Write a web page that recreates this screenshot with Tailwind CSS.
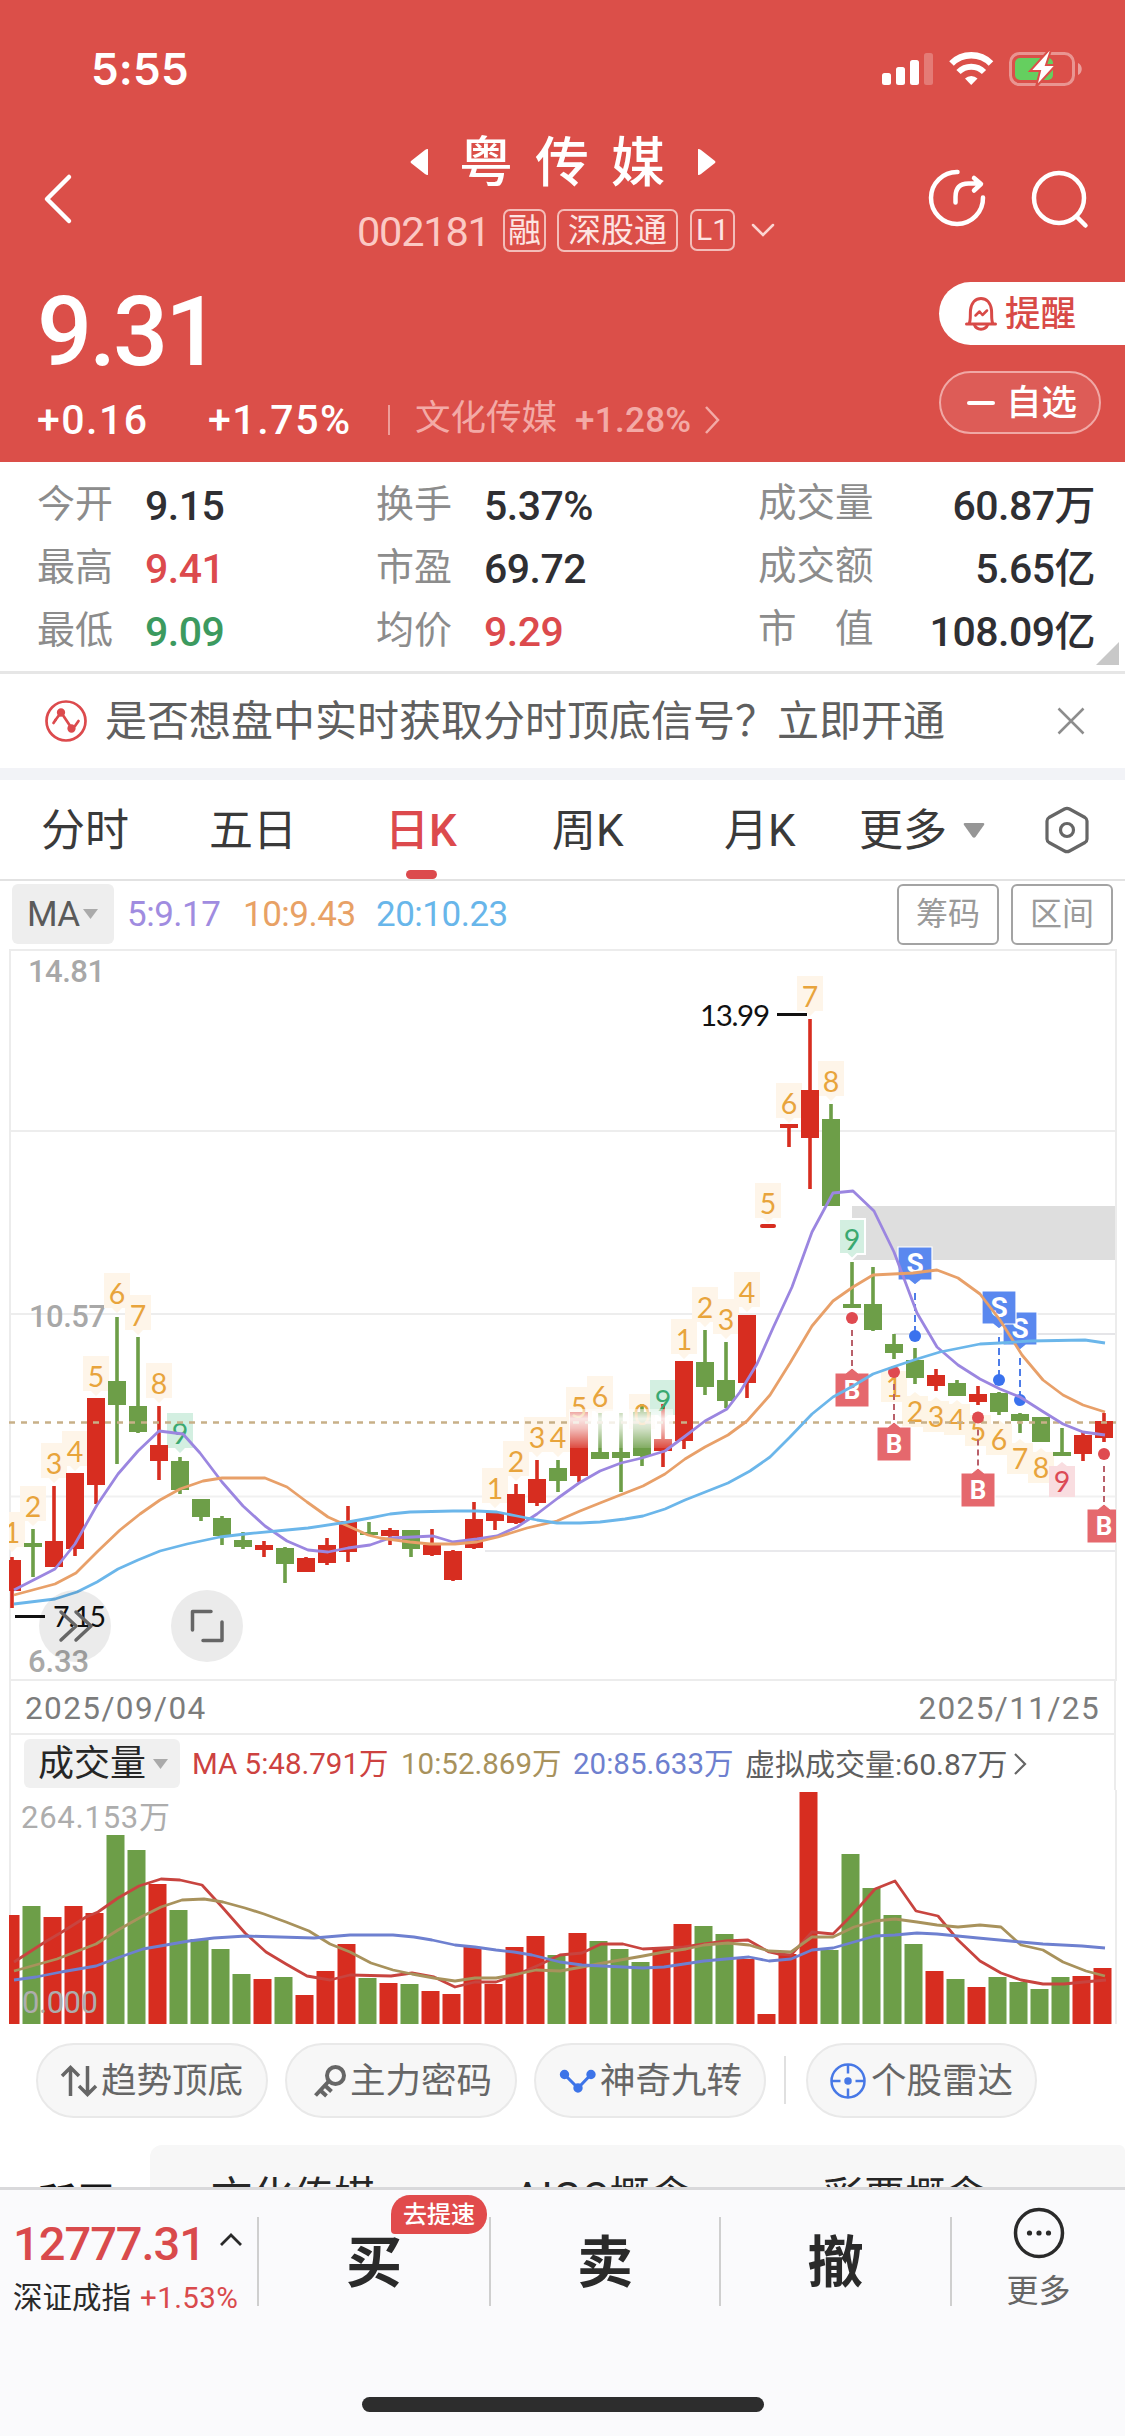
<!DOCTYPE html>
<html lang="zh-CN">
<head>
    <meta charset="UTF-8">
    <meta name="viewport" content="width=device-width, initial-scale=1.0">
    <title>粤传媒 002181</title>
    <script src="https://cdn.jsdelivr.net/npm/@tailwindcss/browser@4"></script>
</head>
<body class="w-[1125px] h-[2436px] overflow-hidden bg-white font-[Roboto,'Noto_Sans_CJK_SC',sans-serif] leading-none whitespace-nowrap">
    <div class="flex flex-col h-[2436px]">
        <!-- Header -->
        <header class="h-[462px] shrink-0 bg-[#db4f49] text-white flex flex-col">
            <!-- Status bar -->
            <div class="h-[138px] flex items-center justify-between pl-[91px] pr-[42px]">
                <span class="font-[Inter,sans-serif] font-semibold text-[44px] tracking-[0.2px]">5:55</span>
                <svg class="w-[202px] h-[36px]" viewBox="881 51 202 36" fill="none">
                    <g fill="#fff">
                        <rect x="882" y="73" width="9" height="12" rx="2.5" />
                        <rect x="896" y="67" width="9" height="18" rx="2.5" />
                        <rect x="910" y="60" width="9" height="25" rx="2.5" />
                        <rect x="924" y="53" width="9" height="32" rx="2.5" opacity=".25" />
                        <path d="M965 78.500a9 9 0 0 1 12.500 0L971.200 85z" />
                    </g>
                    <path d="M951.500 63.500a28 28 0 0 1 39.500 0" stroke="#fff" stroke-width="6.500" />
                    <path d="M958.500 72a18 18 0 0 1 25.500 0" stroke="#fff" stroke-width="6" />
                    <rect x="1010.500" y="53.500" width="63" height="31" rx="9" stroke="#fff" stroke-opacity=".4" stroke-width="3" />
                    <path d="M1078 63c5 2 5 10 0 12z" fill="#fff" opacity=".45" />
                    <rect x="1015" y="58" width="38" height="22" rx="5" fill="#65cf5f" />
                    <path d="M1049 50l-19 21h10l-4 16 20-22h-10l5-15z" fill="#fff" stroke="#db4f49" stroke-width="2" />
                </svg>
            </div>
            <!-- Title and navigation -->
            <div class="h-[124px] flex">
                <svg class="w-[32px] h-[52px] mt-[35px] ml-[42px]" viewBox="42 173 32 52" fill="none" stroke="#fff" stroke-width="4.500" stroke-linecap="round" stroke-linejoin="round"><path d="M69 177L47 199l22 22" /></svg>
                <div class="ml-[283px] w-[420px] flex flex-col">
                    <div class="h-[48px] flex items-center justify-center pr-[8px]">
                        <svg class="w-[20px] h-[28px]" viewBox="0 0 20 28" fill="#fff"><path d="M19 1v26Q17 27 16 26L2 15q-1-1 0-2L16 2q1-1 3-1z" /></svg>
                        <h1 class="ml-[30px] mr-[10px] pt-[3px] text-[54px] font-medium tracking-[22px]">粤传媒</h1>
                        <svg class="w-[20px] h-[28px]" viewBox="0 0 20 28" fill="#fff"><path d="M1 1v26q2 0 3-1L18 15q1-1 0-2L4 2Q3 1 1 1z" /></svg>
                    </div>
                    <div class="mt-[22px] h-[44px] flex items-center">
                        <span class="w-[146px] pt-[4px] text-[41.500px] tracking-[-1.200px] text-[#fbc9c4]">002181</span>
                        <span class="w-[43px] h-[43px] border-2 border-[#f3bdb9] rounded-[7px] text-[33px] text-[#fde4e2] flex items-center justify-center">融</span>
                        <span class="ml-[11px] w-[121px] h-[43px] border-2 border-[#f3bdb9] rounded-[7px] text-[33px] text-[#fde4e2] flex items-center justify-center">深股通</span>
                        <span class="ml-[12px] w-[45px] h-[42px] border-2 border-[#f3bdb9] rounded-[7px] text-[30px] text-[#fde4e2] flex items-center justify-center">L1</span>
                        <svg class="ml-[15px] w-[26px] h-[16px]" viewBox="0 0 26 16" fill="none" stroke="#fbd5d2" stroke-width="2.500" stroke-linecap="round"><path d="M3 3l10 10L23 3" /></svg>
                    </div>
                </div>
                <svg class="ml-[149px] w-[164px] h-[64px] mt-[29px]" viewBox="926 167 164 64" fill="none" stroke="#fff" stroke-width="4.500" stroke-linecap="round" stroke-linejoin="round">
                    <path d="M957.500 172A26 26 0 1 0 983 197.500" />
                    <path d="M955.500 202.500V197q0-13.500 13-13.500H980M974 178l7 6-7 6.500" />
                    <circle cx="1059" cy="198" r="25" />
                    <path d="M1077 217l8.500 8.500" />
                </svg>
            </div>
            <!-- Price -->
            <div class="flex-1 flex justify-between">
                <div class="pl-[37px]">
                    <div class="mt-[22px] text-[97px] font-medium tracking-[-3px]">9.31</div>
                    <div class="mt-[15px] h-[48px] flex items-center text-[41px] font-medium">
                        <span class="w-[171px] tracking-[1.500px]">+0.16</span>
                        <span class="w-[180px] tracking-[1.600px]">+1.75%</span>
                        <span class="w-[2px] h-[30px] bg-[#ee9d99]"></span>
                        <span class="ml-[25px] text-[35.500px] font-normal text-[#f3aaa6] -translate-y-px">文化传媒</span>
                        <span class="ml-[18px] w-[122px] text-[35px] text-[#f3aaa6] tracking-[0.300px]">+1.28%</span>
                        <svg class="ml-[6px] w-[18px] h-[30px]" viewBox="0 0 18 30" fill="none" stroke="#f3aaa6" stroke-width="2.500"><path d="M3 2l12 13L3 28" /></svg>
                    </div>
                </div>
                <div class="w-[186px] mt-[20px]">
                    <div class="h-[63px] bg-white rounded-l-full flex items-center text-[#d84a47]">
                        <svg class="ml-[25px] w-[34px] h-[36px]" viewBox="0 0 34 36" fill="none" stroke="#d84a47" stroke-width="3" stroke-linecap="round" stroke-linejoin="round">
                            <path d="M2.500 28h29M5 28c2-4 1-8 1.500-14C7.500 6 12 2.500 17 2.500S26.500 6 27.500 14c.5 6-.5 10 1.500 14" />
                            <path d="M10.500 29c2 5.500 11 5.500 13 0" />
                            <path d="M11.500 19.500l4-4 3 3.500 4.500-4.500" stroke-width="2.500" />
                        </svg>
                        <span class="ml-[7px] text-[35.500px] font-medium translate-y-px">提醒</span>
                    </div>
                    <div class="mt-[26px] w-[162px] h-[63px] rounded-full border-2 border-[#f0a8a5] bg-white/8 flex items-center">
                        <span class="ml-[26px] w-[28px] h-[4px] bg-white rounded-full"></span>
                        <span class="ml-[11px] text-[35.500px] font-medium translate-y-px">自选</span>
                    </div>
                </div>
            </div>
        </header>

        <!-- Quote figures -->
        <section class="h-[212px] shrink-0 border-b-[3px] border-[#e6e6e6] pt-[13px] relative text-[41px] font-medium text-[#2f2f33] tracking-[-0.5px]">
            <div class="h-[63px] flex items-center pl-[37px] pr-[30px]">
                <span class="w-[108px] text-[38px] font-normal text-[#8c8c8c] tracking-normal -translate-y-[3px]">今开</span><span class="w-[231px]">9.15</span>
                <span class="w-[108px] text-[38px] font-normal text-[#8c8c8c] tracking-normal -translate-y-[3px]">换手</span><span class="w-[274px]">5.37%</span>
                <span class="w-[116px] text-[38.500px] font-normal text-[#8c8c8c] tracking-normal -translate-y-[3px]">成交量</span><span class="flex-1 text-right">60.87万</span>
            </div>
            <div class="h-[63px] flex items-center pl-[37px] pr-[30px]">
                <span class="w-[108px] text-[38px] font-normal text-[#8c8c8c] tracking-normal -translate-y-[3px]">最高</span><span class="w-[231px] text-[#dc4a4d]">9.41</span>
                <span class="w-[108px] text-[38px] font-normal text-[#8c8c8c] tracking-normal -translate-y-[3px]">市盈</span><span class="w-[274px]">69.72</span>
                <span class="w-[116px] text-[38.500px] font-normal text-[#8c8c8c] tracking-normal -translate-y-[3px]">成交额</span><span class="flex-1 text-right">5.65亿</span>
            </div>
            <div class="h-[63px] flex items-center pl-[37px] pr-[30px]">
                <span class="w-[108px] text-[38px] font-normal text-[#8c8c8c] tracking-normal -translate-y-[3px]">最低</span><span class="w-[231px] text-[#3c9a5f]">9.09</span>
                <span class="w-[108px] text-[38px] font-normal text-[#8c8c8c] tracking-normal -translate-y-[3px]">均价</span><span class="w-[274px] text-[#dc4a4d]">9.29</span>
                <span class="w-[116px] text-[38.500px] font-normal text-[#8c8c8c] tracking-normal -translate-y-[3px]">市　值</span><span class="flex-1 text-right">108.09亿</span>
            </div>
            <svg class="absolute right-[6px] bottom-[6px] w-[23px] h-[23px]" viewBox="0 0 23 23" fill="#c8c8c8"><path d="M23 0v23H0z" /></svg>
        </section>

        <!-- Banner -->
        <section class="h-[94px] shrink-0 flex items-center pl-[45px] pr-[40px] text-[42px] text-[#5f5f5f]">
            <svg class="w-[42px] h-[42px]" viewBox="0 0 42 42" fill="none" stroke="#dc4a4d" stroke-width="2.700" stroke-linecap="round" stroke-linejoin="round">
                <circle cx="21" cy="21" r="19.500" />
                <path d="M8.500 23l2-3M18.500 16l6 9M30 26l3.500-5" />
                <circle cx="16" cy="12.500" r="2.800" fill="#dc4a4d" /><circle cx="26.500" cy="28.500" r="2.800" fill="#dc4a4d" />
                <path d="M10.500 20l4-5.500" />
            </svg>
            <span class="ml-[18px] flex-1 translate-y-[1px]">是否想盘中实时获取分时顶底信号？立即开通</span>
            <svg class="w-[28px] h-[28px]" viewBox="0 0 28 28" stroke="#8d8d8d" stroke-width="2.500"><path d="M1.500 1.500l25 25M26.500 1.500l-25 25" /></svg>
        </section>
        <div class="h-[12px] shrink-0 bg-[#f2f3f7]"></div>

        <!-- Period tabs -->
        <nav class="h-[101px] shrink-0 border-b-2 border-[#e2e2e2] flex items-center pl-[41px] pt-[2px] text-[44px] text-[#3a3a3a] relative">
            <span class="w-[168px]">分时</span>
            <span class="w-[176px]">五日</span>
            <span class="w-[167px] text-[#dc4a4d] font-medium">日K</span>
            <span class="w-[172px]">周K</span>
            <span class="w-[135px]">月K</span>
            <span class="w-[104px]">更多</span>
            <svg class="w-[22px] h-[15px]" viewBox="0 0 22 15" fill="#969696"><path d="M2 0h18q2 0 1 2l-8.500 12q-1.500 1.500-3 0L1 2Q0 0 2 0z" /></svg>
            <svg class="ml-[59px] mb-[2px] w-[46px] h-[48px]" viewBox="0 0 46 48" fill="none" stroke="#666" stroke-width="3.200" stroke-linejoin="round"><path d="M20.500 3q2.500-1.300 5 0L41 11.500q2 1.200 2 3.500v18q0 2.300-2 3.500L25.500 45q-2.500 1.300-5 0L5 36.500Q3 35.300 3 33V15q0-2.300 2-3.500z" /><circle cx="23" cy="24" r="6.500" /></svg>
            <span class="absolute left-[406px] bottom-0 w-[31px] h-[9px] rounded-[5px] bg-[#dc4a4d]"></span>
        </nav>

        <!-- Moving averages -->
        <div class="h-[68px] shrink-0 flex items-center pl-[12px] pr-[12px] pb-[2px] text-[35px] tracking-[-0.500px]">
            <span class="w-[102px] h-[60px] rounded-[6px] bg-[#eee] text-[#5a5a5a] flex items-center pl-[15px]">MA
                <svg class="ml-[3px] w-[15px] h-[10px]" viewBox="0 0 15 10" fill="#aaa"><path d="M0 0h15L7.500 10z" /></svg>
            </span>
            <span class="ml-[13px] w-[116px] text-[#a08ce0]">5:9.17</span>
            <span class="w-[133px] text-[#e8a165]">10:9.43</span>
            <span class="flex-1 text-[#68b6ea]">20:10.23</span>
            <span class="w-[102px] h-[61px] rounded-[6px] border-2 border-[#a3a3a3] text-[32px] tracking-normal text-[#9a9a9a] flex items-center justify-center">筹码</span>
            <span class="ml-[12px] w-[102px] h-[61px] rounded-[6px] border-2 border-[#a3a3a3] text-[32px] tracking-normal text-[#9a9a9a] flex items-center justify-center">区间</span>
        </div>

        <!-- Candles -->
        <svg id="kline" class="w-[1125px] h-[732px] shrink-0" viewBox="0 949 1125 732" fill="none"></svg>

        <!-- Date axis -->
        <div class="h-[54px] shrink-0 mx-[9px] border-x-2 border-b-2 border-[#ececec] flex items-center justify-between pl-[14px] pr-[14px] pt-[4px] text-[31.500px] text-[#7c7c7c] tracking-[1.400px]">
            <span>2025/09/04</span><span>2025/11/25</span>
        </div>

        <!-- Volume header -->
        <div class="h-[55px] shrink-0 mx-[9px] border-x-2 border-[#ececec] flex items-center pl-[13px] pt-[2px] text-[29.500px]">
            <span class="w-[156px] h-[49px] rounded-[6px] bg-[#f0f0f0] text-[36px] text-[#262626] flex items-center pl-[14px]">成交量
                <svg class="ml-[7px] w-[15px] h-[10px]" viewBox="0 0 15 10" fill="#aaa"><path d="M0 0h15L7.500 10z" /></svg>
            </span>
            <span class="ml-[12px] w-[209px] pt-[2px] text-[#cd4240]">MA 5:48.791万</span>
            <span class="w-[172px] pt-[2px] text-[#a8925c]">10:52.869万</span>
            <span class="w-[172px] pt-[2px] text-[#6e80cf]">20:85.633万</span>
            <span class="pt-[2px] text-[#5f5f5f] text-[30px]">虚拟成交量:60.87万</span>
            <svg class="ml-[5px] w-[14px] h-[24px]" viewBox="0 0 14 24" fill="none" stroke="#666" stroke-width="2.200"><path d="M2 2l10 10L2 22" /></svg>
        </div>

        <!-- Volume bars -->
        <svg id="volume" class="w-[1125px] h-[235px] shrink-0" viewBox="0 1790 1125 235" fill="none"></svg>

        <!-- Indicator shortcuts -->
        <div class="h-[94px] shrink-0 mt-[18px] flex items-start pl-[36px] text-[35.500px] text-[#666]">
            <span class="w-[232px] h-[75px] rounded-full border-2 border-[#e9e9e9] bg-[#f7f7f7] flex items-center pl-[22px]">
                <svg class="w-[38px] h-[34px]" viewBox="0 0 38 34" fill="none" stroke="#666" stroke-width="3.500"><path d="M10.500 32V4M2 12l8.500-8.500L19 12M27.500 2v28M19 22l8.500 8.500L36 22" /></svg>
                <span class="ml-[3px] translate-y-px">趋势顶底</span>
            </span>
            <span class="ml-[17px] w-[232px] h-[75px] rounded-full border-2 border-[#e9e9e9] bg-[#f7f7f7] flex items-center pl-[26px]">
                <svg class="w-[36px] h-[36px]" viewBox="0 0 36 36" fill="none" stroke="#666" stroke-width="4"><circle cx="22.500" cy="12.500" r="8.500" /><path d="M16 18L2.500 32.500M12 22.500l6.500 6M7.500 27.500l6 5.500" /></svg>
                <span class="ml-[1px] translate-y-px">主力密码</span>
            </span>
            <span class="ml-[17px] w-[232px] h-[75px] rounded-full border-2 border-[#e9e9e9] bg-[#f7f7f7] flex items-center pl-[23px]">
                <svg class="w-[38px] h-[24px]" viewBox="0 0 38 24" fill="#3d74e8" stroke="#3d74e8" stroke-width="3"><path d="M5.500 5.500L19 19 32 5.500" fill="none" /><circle cx="5.500" cy="5.500" r="3.200" /><circle cx="19" cy="19" r="3.200" /><circle cx="32" cy="5.500" r="3.200" /></svg>
                <span class="ml-[3px] translate-y-px">神奇九转</span>
            </span>
            <span class="ml-[18px] mt-[13px] w-[2px] h-[48px] bg-[#e0e0e0]"></span>
            <span class="ml-[20px] w-[231px] h-[75px] rounded-full border-2 border-[#e9e9e9] bg-[#f7f7f7] flex items-center pl-[22px]">
                <svg class="w-[36px] h-[36px]" viewBox="0 0 36 36" fill="none" stroke="#4778e6" stroke-width="2.500"><circle cx="18" cy="18" r="16.500" /><path d="M18 2v8.500M18 25.500V34M2 18h8.500M25.500 18H34" /><circle cx="18" cy="18" r="2.500" fill="#4778e6" /></svg>
                <span class="ml-[5px] translate-y-px">个股雷达</span>
            </span>
        </div>

        <!-- Sector strip, cut off by the toolbar -->
        <div class="h-[50px] shrink-0 overflow-hidden flex items-start pt-[8px]">
            <span class="w-[150px] pl-[37px] pt-[38.500px] text-[39px] font-bold text-[#151515]">所属</span>
            <div class="flex-1 h-[100px] bg-[#f7f7f7] rounded-tl-[12px] rounded-tr-[6px] pl-[61px] pt-[32px] flex text-[41px] text-[#262626]">
                <span class="w-[303px]">文化传媒</span>
                <span class="w-[309px] tracking-[0.700px]">AIGC概念</span>
                <span>彩票概念</span>
            </div>
        </div>

        <!-- Toolbar -->
        <footer class="flex-1 border-t-[3px] border-[#d9d9db] bg-[#fafafc]">
            <div class="h-[142px] flex items-center text-[#2a2a2a]">
                <div class="w-[257px] pl-[13px] pt-[12px]">
                    <div class="flex items-center text-[#d94a4c] text-[47px] font-medium tracking-[-1px]">12777.31
                        <svg class="ml-[14px] mb-[8px] w-[24px] h-[14px]" viewBox="0 0 24 14" fill="none" stroke="#2a2a2a" stroke-width="2.800"><path d="M2 12L12 2l10 10" /></svg>
                    </div>
                    <div class="mt-[17px] flex items-center text-[29.500px]">深证成指<span class="ml-[9px] text-[#d94a4c] tracking-[0.400px]">+1.53%</span></div>
                </div>
                <span class="w-[2px] h-[89px] bg-[#cfcfcf]"></span>
                <div class="w-[230px] pt-[4px] text-center text-[56px] font-bold relative">买
                    <span class="absolute left-[132px] top-[-36px] w-[96px] h-[39px] rounded-[19px] rounded-bl-[4px] bg-[#e14b4c] text-white text-[24px] font-medium flex items-center justify-center">去提速</span>
                </div>
                <span class="w-[2px] h-[89px] bg-[#cfcfcf]"></span>
                <div class="w-[228px] pt-[4px] text-center text-[56px] font-bold">卖</div>
                <span class="w-[2px] h-[89px] bg-[#cfcfcf]"></span>
                <div class="w-[229px] pt-[4px] text-center text-[56px] font-bold">撤</div>
                <span class="w-[2px] h-[89px] bg-[#cfcfcf]"></span>
                <div class="flex-1 flex flex-col items-center pb-[8px] text-[32px] text-[#666]">
                    <svg class="w-[52px] h-[52px]" viewBox="0 0 52 52" fill="#2a2a2a"><circle cx="26" cy="26" r="23.500" fill="none" stroke="#2a2a2a" stroke-width="3.500" /><circle cx="16.500" cy="26" r="2.600" /><circle cx="26" cy="26" r="2.600" /><circle cx="35.500" cy="26" r="2.600" /></svg>
                    <span class="mt-[16px]">更多</span>
                </div>
            </div>
            <div class="mt-[65px] mx-auto w-[402px] h-[15px] rounded-full bg-[#2d2d2d]"></div>
        </footer>
    </div>

    <script>
        const RED = '#d72d20', GREEN = '#6d9e48';
        const STEP = 21, FIRST = 12;
        const cx = i => FIRST + i * STEP;

        // [color, high, body top, body bottom, low]
        const candles = [
            ['r',1557,1560,1591,1608],['g',1529,1543,1547,1577],['r',1486,1541,1567,1567],['r',1473,1473,1549,1556],['r',1398,1398,1485,1504],
            ['g',1317,1381,1405,1464],['g',1337,1406,1432,1433],['r',1406,1445,1461,1480],['g',1457,1461,1490,1494],['g',1499,1499,1517,1521],
            ['g',1516,1518,1536,1545],['g',1532,1540,1547,1549],['r',1541,1545,1550,1557],['g',1547,1548,1564,1583],['r',1557,1558,1572,1572],
            ['r',1538,1545,1563,1565],['r',1506,1521,1552,1562],['g',1522,1532,1535,1535],['r',1528,1530,1536,1545],['g',1530,1530,1549,1557],
            ['r',1529,1545,1555,1556],['r',1550,1551,1580,1581],['r',1502,1519,1548,1549],['r',1512,1513,1521,1530],['r',1484,1494,1523,1524],
            ['r',1460,1479,1503,1506],['g',1460,1468,1481,1492],['r',1412,1412,1476,1482],['g',1413,1452,1459,1459],['g',1413,1452,1458,1492],
            ['g',1404,1412,1456,1466],['r',1404,1439,1451,1467],['r',1361,1361,1441,1449],['g',1330,1362,1387,1395],['g',1342,1380,1401,1408],
            ['r',1315,1315,1383,1398],['r',1224,1224,1228,1228],['r',1124,1124,1128,1147],['r',1019,1090,1138,1189],['g',1104,1119,1206,1206],
            ['g',1262,1304,1308,1308],['g',1267,1304,1330,1331],['g',1334,1344,1353,1359],['g',1348,1360,1378,1384],['r',1369,1375,1386,1391],
            ['g',1380,1383,1396,1396],['r',1386,1394,1402,1405],['g',1392,1393,1412,1415],['g',1413,1414,1421,1433],['g',1417,1417,1442,1442],
            ['g',1428,1452,1456,1456],['r',1432,1435,1454,1461],['r',1413,1421,1438,1442]
        ];

        // [candle, digit, baseline, kind]: o = orange, g = green nine
        const counts = [
            [0,1,1543,'o'],[1,2,1517,'o'],[2,3,1474,'o'],[3,4,1462,'o'],[4,5,1387,'o'],[5,6,1304,'o'],[6,7,1326,'o'],[7,8,1394,'o'],[8,9,1444,'g'],
            [23,1,1499,'o'],[24,2,1472,'o'],[25,3,1448,'o'],[26,4,1448,'o'],[27,5,1418,'o'],[28,6,1407,'o'],[30,0,1425,'o'],[31,9,1411,'g'],
            [32,1,1350,'o'],[33,2,1318,'o'],[34,3,1330,'o'],[35,4,1303,'o'],[36,5,1214,'o'],[37,6,1114,'o'],[38,7,1007,'o'],[39,8,1092,'o'],[40,9,1250,'g']
        ];
        const countsBelow = [[42,1,1397],[43,2,1422],[44,3,1427],[45,4,1430],[46,5,1441],[47,6,1450],[48,7,1469],[49,8,1478],[50,9,1492]];

        // [candle, dot y, box top]
        const buys = [[40,1318,1373],[42,1372,1427],[46,1417.5,1473],[52,1454,1509]];
        const sells = [[48,1400,1312],[43,1336,1247],[47,1380,1291]];

        const ma5 = '14,1590 55,1569 75,1544 97,1505 118,1474 138,1451 159,1431 183,1434 200,1453 222,1482 243,1506 265,1526 287,1541 308,1550 328,1552 348,1548 370,1545 390,1538 413,1537 433,1536 453,1542 477,1539 497,1536 517,1527 537,1514 558,1498 579,1483 600,1471 621,1463 642,1458 665,1451 684,1437 705,1421 727,1409 740,1392 757,1364 773,1328 792,1287 812,1232 833,1193 853,1191 874,1211 894,1252 917,1313 937,1347 958,1365 980,1379 1000,1389 1020,1397 1042,1411 1063,1424 1083,1432 1105,1435';
        const ma10 = '14,1595 55,1584 76,1573 98,1551 120,1530 140,1514 160,1500 180,1489 203,1481 222,1478 265,1478 287,1487 307,1502 328,1517 348,1526 368,1535 380,1538 410,1542 430,1544 455,1544 477,1542 498,1537 527,1528 557,1521 580,1511 600,1503 643,1486 665,1474 685,1459 705,1447 728,1435 747,1421 770,1395 790,1363 812,1326 833,1301 853,1287 873,1275 913,1273 937,1270 958,1278 980,1294 1000,1320 1022,1355 1043,1380 1063,1395 1083,1405 1105,1412';
        const ma20 = '14,1604 55,1599 77,1592 97,1582 118,1569 138,1560 160,1551 187,1544 220,1537 245,1534 287,1530 308,1528 348,1522 370,1518 390,1514 410,1512 453,1511 477,1511 497,1512 517,1516 537,1520 557,1523 580,1523 600,1522 625,1519 643,1516 665,1509 685,1500 728,1483 750,1471 770,1457 790,1437 812,1414 833,1397 853,1386 873,1374 893,1367 917,1359 940,1352 960,1348 980,1344 1000,1343 1030,1341 1085,1340 1105,1343';

        const volTops = [1915,1906,1917,1906,1913,1835,1850,1884,1910,1939,1949,1974,1979,1977,1995,1971,1944,1978,1983,1984,1991,1994,1947,1984,1947,1936,1955,1933,1941,1949,1962,1949,1924,1926,1934,1959,2014,1954,1792,1950,1854,1888,1915,1944,1971,1979,1987,1977,1982,1989,1977,1976,1968];
        const vol5 = '14,1962 45,1942 62,1932 86,1917 98,1912 118,1898 139,1886 161,1879 180,1880 202,1885 223,1908 245,1933 266,1952 286,1964 307,1976 330,1980 350,1975 391,1976 412,1973 434,1977 455,1987 475,1982 496,1982 518,1974 539,1965 560,1955 582,1953 601,1944 623,1944 643,1949 684,1947 704,1944 726,1941 748,1940 769,1952 778,1954 791,1955 812,1932 833,1934 854,1913 875,1889 895,1881 916,1911 938,1916 958,1940 980,1961 1001,1973 1021,1980 1043,1984 1064,1984 1084,1982 1106,1980';
        const vol10 = '14,1971 57,1959 96,1944 118,1930 141,1917 161,1907 182,1900 204,1899 223,1902 245,1908 264,1914 286,1922 309,1931 330,1944 350,1952 371,1963 393,1970 412,1974 434,1978 455,1981 475,1978 496,1978 518,1974 536,1970 560,1971 582,1967 603,1963 643,1956 664,1952 686,1949 704,1945 728,1943 749,1945 769,1951 791,1952 812,1937 833,1937 854,1927 875,1921 895,1919 917,1922 937,1925 958,1927 980,1925 1001,1927 1021,1945 1043,1950 1063,1962 1086,1971 1105,1976';
        const vol20 = '14,1980 36,1977 61,1972 96,1966 120,1957 143,1949 189,1941 214,1938 246,1936 314,1938 350,1935 393,1935 414,1937 432,1940 455,1945 475,1947 496,1950 514,1952 532,1955 560,1962 582,1965 623,1967 643,1968 664,1967 684,1964 704,1961 726,1959 749,1957 769,1961 791,1959 812,1950 833,1948 854,1942 875,1936 895,1935 917,1933 937,1934 978,1938 1021,1942 1043,1944 1082,1946 1105,1948';

        const rect = (x, y, w, h, fill, extra = '') => `<rect x="${x}" y="${y}" width="${w}" height="${h}" fill="${fill}" ${extra}/>`;
        const line = (x1, y1, x2, y2, color, w = 2, extra = '') => `<path d="M${x1} ${y1}L${x2} ${y2}" stroke="${color}" stroke-width="${w}" ${extra}/>`;
        const poly = (pts, color, w = 2.8) => `<polyline points="${pts}" stroke="${color}" stroke-width="${w}" stroke-linejoin="round"/>`;
        const text = (x, y, s, size, fill, extra = '') => `<text x="${x}" y="${y}" font-size="${size}" fill="${fill}" ${extra}>${s}</text>`;
        const digit = (i, n, y, fill) => text(cx(i), y, n, 28.5, fill, 'text-anchor="middle" font-family="Lato, Roboto, sans-serif"');

        function drawKline() {
            let s = '<clipPath id="plot"><rect x="9" y="949" width="1107" height="732"/></clipPath>';
            [1131, 1314].forEach(y => s += line(10, y, 1116, y, '#ededed'));
            s += line(10, 1496.5, 1116, 1496.5, '#f1f1f1');
            s += line(485, 1551, 1116, 1551, '#e9e9ec');
            s += line(894, 1334, 1116, 1334, '#dddde0', 1.5);
            s += rect(852, 1206, 264, 54, '#dedede');
            s += line(10, 949, 10, 1681, '#ececec') + line(1116, 949, 1116, 1681, '#ececec');
            s += line(9, 950, 1117, 950, '#ececec') + line(9, 1680, 1117, 1680, '#ececec');
            s += text(28, 982, '14.81', 31, '#a8a8a8', 'font-weight="500" textLength="77"');
            s += text(29, 1326.5, '10.57', 31, '#a8a8a8', 'font-weight="500" textLength="77"');
            s += text(28, 1672, '6.33', 31, '#a8a8a8', 'font-weight="500" textLength="61"');
            s += '<g clip-path="url(#plot)">';
            counts.forEach(([i, n, y, k]) => {
                const x = cx(i), fill = k === 'g' ? '#d3efe1' : '#fef5e9';
                s += `<path d="M${x - 13} ${y - 31}h26v35h-8l-5 5-5-5h-8z" fill="${fill}" ${i === 40 ? 'stroke="#fff" stroke-width="2"' : ''}/>`;
            });
            countsBelow.forEach(([i, n, y]) => {
                const x = cx(i);
                s += `<path d="M${x - 13} ${y - 26}h8l5-4 5 4h8v31h-26z" fill="${n === 9 ? '#f9dde0' : '#fef5e6'}"/>`;
            });
            candles.forEach(([c, hi, top, bot, lo], i) => {
                const color = c === 'r' ? RED : GREEN;
                s += rect(cx(i) - 1.8, hi, 3.6, lo - hi, color);
                s += i === 36 ? rect(760, 1224, 16, 4, color, 'rx="2"') : rect(cx(i) - 9, top, 18, bot - top, color);
            });
            counts.forEach(([i, n, y, k]) => s += digit(i, n, y, k === 'g' ? '#3aa970' : '#e8a43c'));
            countsBelow.forEach(([i, n, y]) => s += digit(i, n, y, n === 9 ? '#dc4a55' : '#e8a43c'));

            s += line(9, 1422.5, 1116, 1422.5, '#c8b088', 2.6, 'stroke-dasharray="6 6"');
            // faded patch over the price line
            s += '<linearGradient id="fade" x1="0" y1="0" x2="0" y2="1"><stop offset="0" stop-color="#fff" stop-opacity=".45"/><stop offset=".25" stop-color="#fff" stop-opacity=".88"/><stop offset=".5" stop-color="#fff" stop-opacity=".7"/><stop offset="1" stop-color="#fff" stop-opacity=".15"/></linearGradient>';
            s += rect(569, 1409, 104, 39, 'url(#fade)');

            buys.forEach(([i, dot, top]) => {
                const x = cx(i);
                s += line(x, dot + 12, x, top - 6, '#b9606a', 2, 'stroke-dasharray="6 4"');
                s += `<circle cx="${x}" cy="${dot}" r="6" fill="#df4a50"/>`;
                s += `<path d="M${x - 17} ${top}h11l6-5 6 5h11v34h-34z" fill="#e5686d" stroke="#fff" stroke-width="1"/>`;
                s += text(x, top + 26, 'B', 26, '#fff', 'text-anchor="middle" font-weight="700"');
            });
            sells.forEach(([i, dot, top]) => {
                const x = cx(i);
                s += line(x, top + 46, x, dot - 4, '#4e7de8', 2, 'stroke-dasharray="7 4"');
                s += `<circle cx="${x}" cy="${dot}" r="6" fill="#3a72ee"/>`;
                s += `<path d="M${x - 17} ${top}h34v33h-11l-6 5-6-5h-11z" fill="#5a88ef" stroke="#fff" stroke-width="1.2"/>`;
                s += text(x, top + 25.5, 'S', 28, '#fff', 'text-anchor="middle" font-weight="700"');
            });
            s += poly(ma5, '#9b86e0') + poly(ma10, '#e8a069') + poly(ma20, '#6bb6ea');
            s += '</g>';

            const price = 'font-family="Lato, Roboto, sans-serif"';
            s += text(700, 1025.5, '13.99', 29.5, '#111', price + ' textLength="70"') + line(777, 1014.5, 807, 1014.5, '#111', 3);
            s += text(53, 1627, '7.15', 28.5, '#111', price + ' textLength="53" style="font-kerning:none"') + line(15, 1616.5, 45, 1616.5, '#111', 3);

            s += '<circle cx="75" cy="1626" r="36" fill="#000" fill-opacity=".08"/><circle cx="207" cy="1626" r="36" fill="#ebebeb"/>';
            s += '<g stroke="#666" stroke-width="3.5" stroke-linecap="round" stroke-linejoin="round"><path d="M61 1612l15 14-15 14M76 1612l15 14-15 14M192.5 1630v-18.5H211M222 1622v18.5h-19"/></g>';
            document.getElementById('kline').innerHTML = s;
        }

        function drawVolume() {
            let s = line(10, 1790, 10, 2024, '#ececec') + line(1116, 1790, 1116, 2024, '#ececec');
            s += text(21, 1827.5, '264.153万', 31, '#adadad', 'textLength="149"');
            s += '<clipPath id="vplot"><rect x="9" y="1790" width="1107" height="235"/></clipPath><g clip-path="url(#vplot)">';
            volTops.forEach((top, i) => s += rect(cx(i) - 10.5, top, 18, 2024 - top, candles[i][0] === 'r' ? RED : GREEN));
            s += poly(vol5, '#c8443f') + poly(vol10, '#a8925c') + poly(vol20, '#6e80d0') + '</g>';
            s += text(22, 2012.5, '0.000', 31, '#adadad', 'textLength="76"');
            document.getElementById('volume').innerHTML = s;
        }

        drawKline();
        drawVolume();
    </script>
</body>
</html>
